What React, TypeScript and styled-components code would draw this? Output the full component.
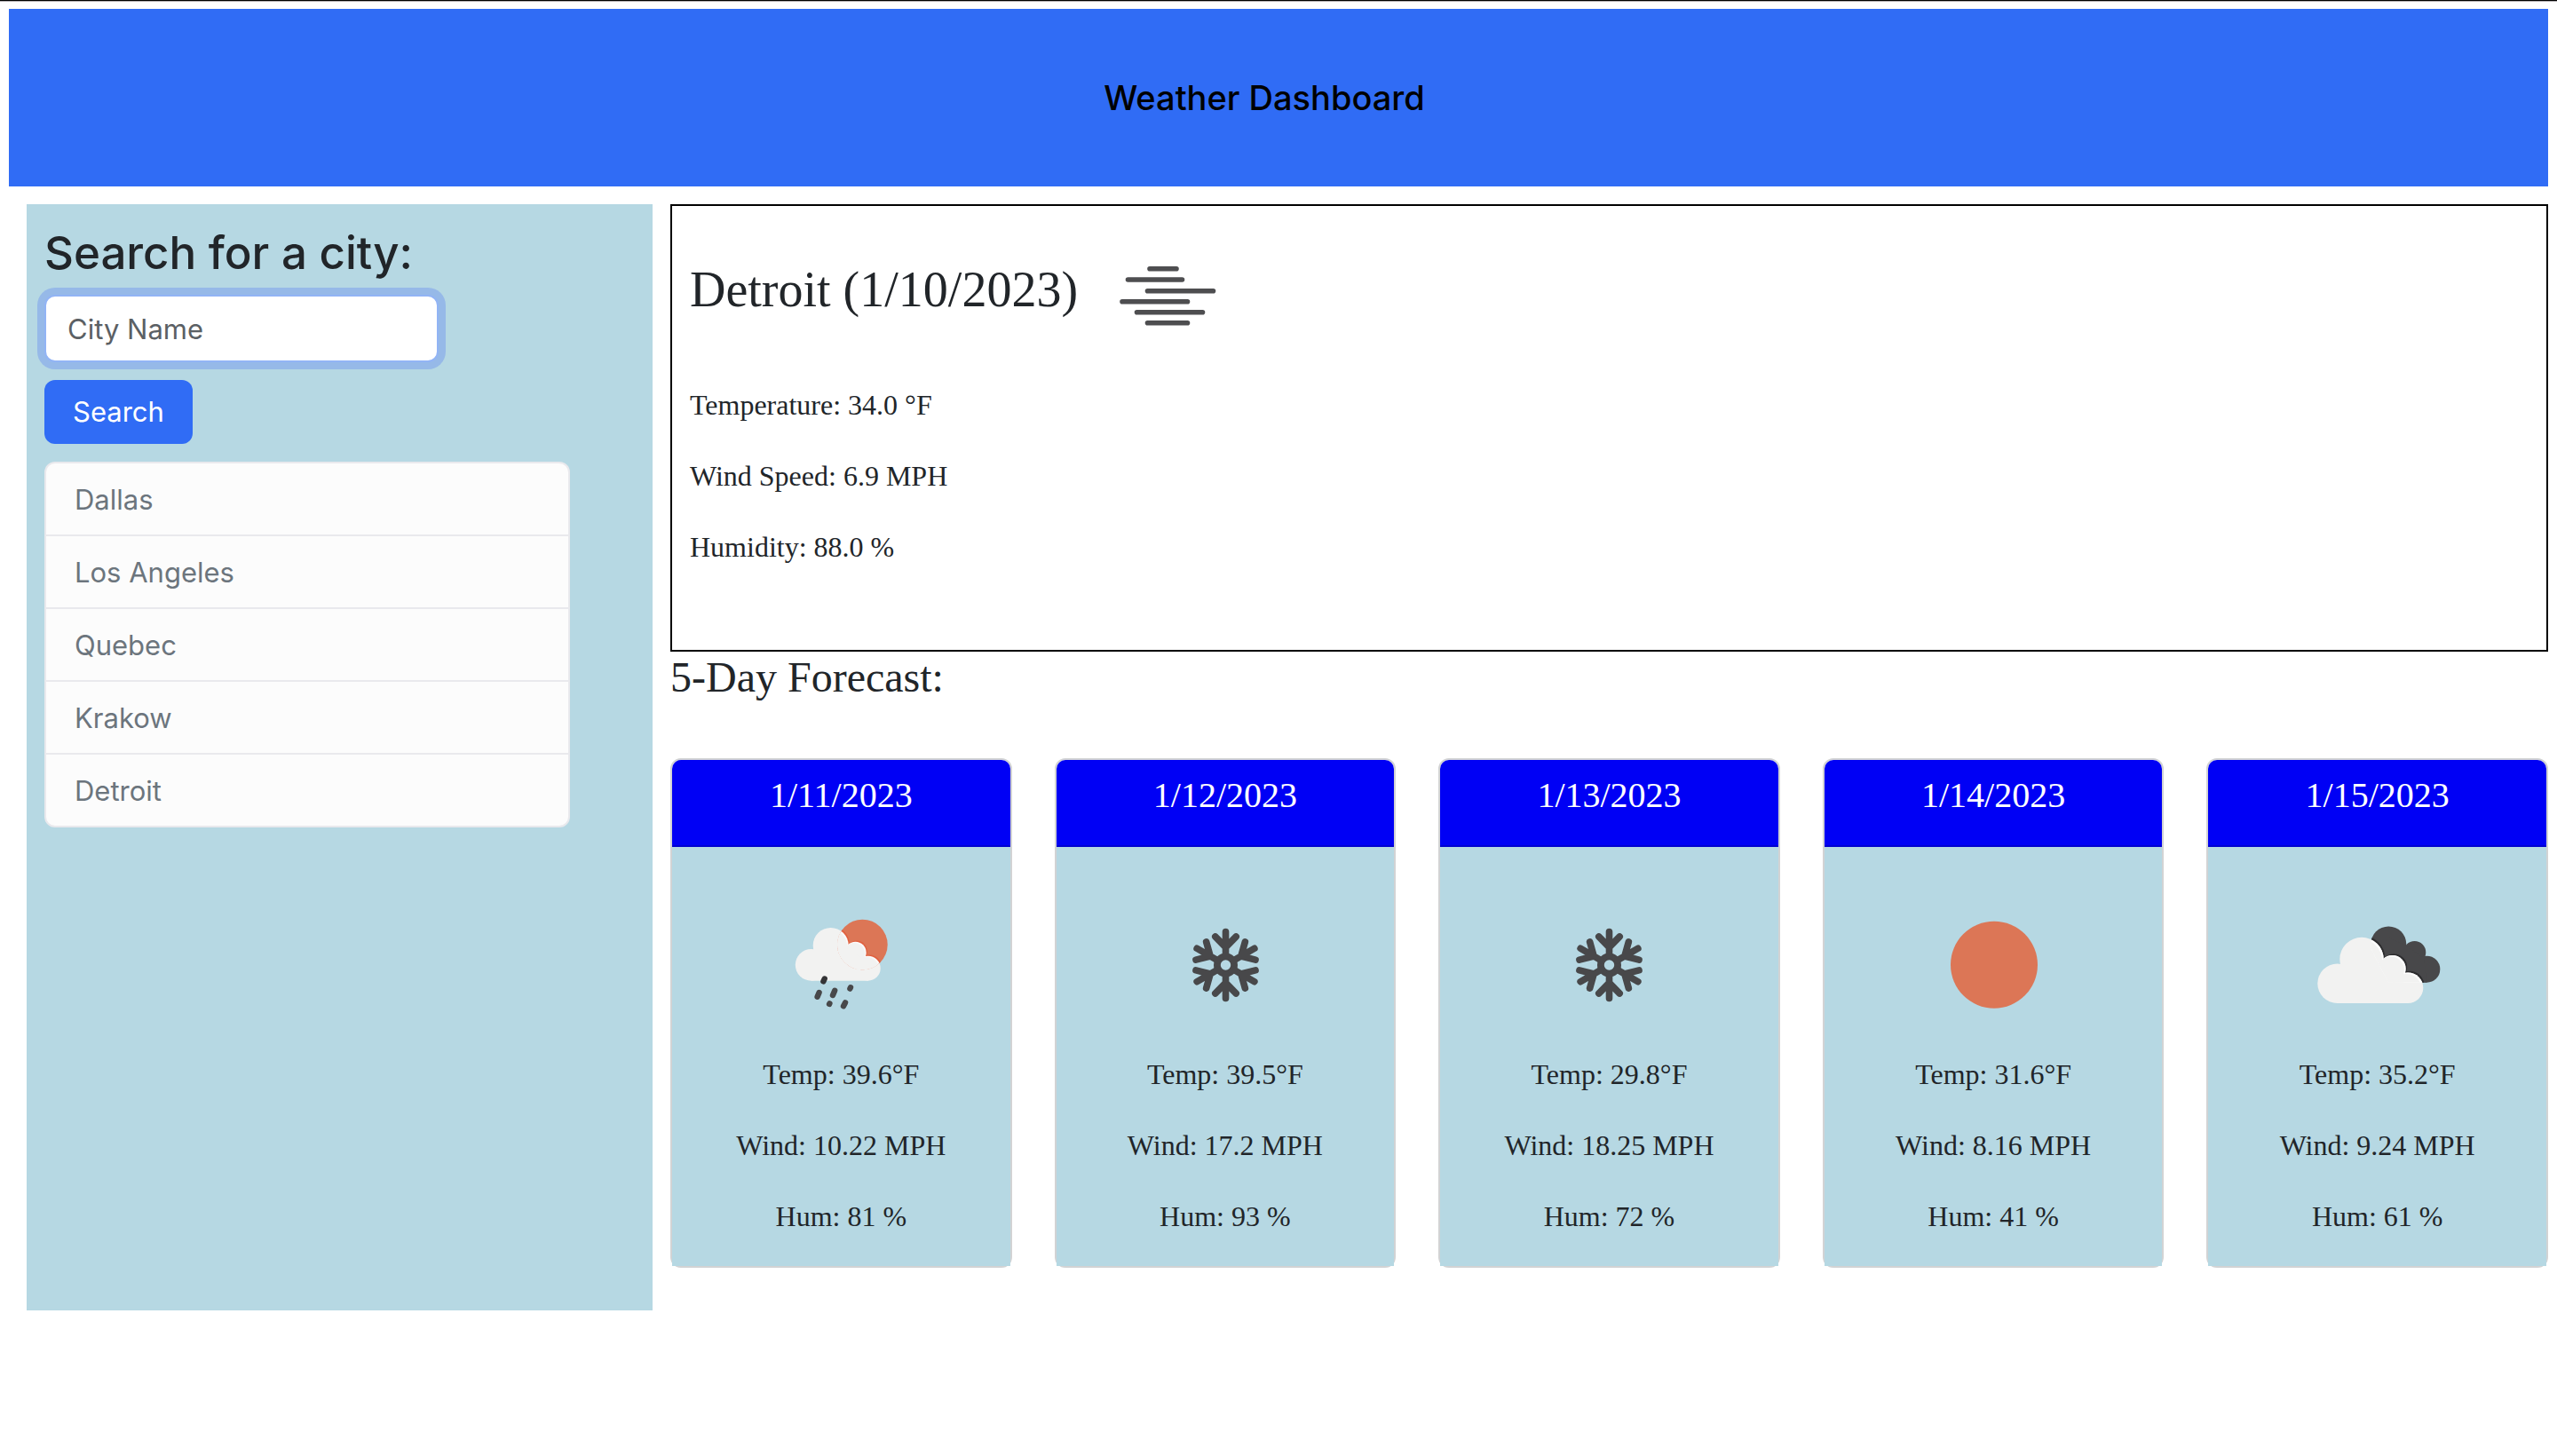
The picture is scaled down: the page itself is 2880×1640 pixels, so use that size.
import React from "react";
import styled, { createGlobalStyle } from "styled-components";

const sans = `Inter, "Liberation Sans", sans-serif`;
const serif = `"Liberation Serif", "Times New Roman", serif`;

const GlobalStyle = createGlobalStyle`
  *, *::before, *::after { box-sizing: border-box; }
  body { margin: 0; background: #ffffff; color: #212529; font-family: ${sans}; font-size: 31px; line-height: 48px; }
  h1, h2, h3, p, ul { margin: 0; padding: 0; font-weight: 400; }
`;

const Page = styled.div`
  display: flex;
  flex-direction: column;
  gap: 20px;
  padding: 9px 10px 20px;
  border-top: 1px solid #000000;
  box-shadow: inset 0 1px 0 #b4b0b4;
`;

const Header = styled.header`
  display: flex;
  align-items: center;
  justify-content: center;
  min-height: 200px;
  padding-right: 32px;
  background: #306cf5;
`;

const Title = styled.h1`
  font-size: 38px;
  line-height: 48px;
  font-weight: 500;
  color: #000000;
`;

const Columns = styled.div`
  display: grid;
  grid-template-columns: 1fr 3fr;
  gap: 20px;
  padding-left: 20px;
`;

const Sidebar = styled.aside`
  padding: 20px;
  background: #b6d8e3;
`;

const SearchForm = styled.form`
  display: flex;
  flex-direction: column;
  align-items: flex-start;
  gap: 20px;
`;

const Field = styled.div`
  display: flex;
  flex-direction: column;
  gap: 12px;
  max-width: 100%;
`;

const SearchHeading = styled.h2`
  font-size: 51px;
  line-height: 70px;
  font-weight: 500;
`;

const CityInput = styled.input`
  width: 444px;
  max-width: 100%;
  height: 76px;
  padding: 12px 24px;
  border: 2px solid #92b4f5;
  border-radius: 12px;
  outline: none;
  background: #ffffff;
  box-shadow: 0 0 0 8px #96b9e8;
  color: #212529;
  font: inherit;
  &::placeholder { color: #5b6064; opacity: 1; }
`;

const SearchButton = styled.button`
  height: 72px;
  padding: 0 32px;
  border: 0;
  border-radius: 12px;
  background: #306cf5;
  color: #ffffff;
  font: inherit;
`;

const CityList = styled.ul`
  max-width: 592px;
  margin-top: 20px;
  list-style: none;
  overflow: hidden;
  border: 2px solid #e9e9ed;
  border-radius: 12px;
  background: #fcfcfc;
`;

const CityItem = styled.li`
  & + & { border-top: 2px solid #e9e9ed; }
`;

const CityButton = styled.button`
  display: block;
  width: 100%;
  padding: 17px 32px 15px;
  border: 0;
  background: transparent;
  color: #6c757d;
  font: inherit;
  text-align: left;
`;

const Main = styled.main`
  padding-bottom: 48px;
  font-family: ${serif};
  font-size: 32px;
`;

const Current = styled.section`
  padding: 0 20px 60px;
  border: 2px solid #000000;
`;

const CurrentHeading = styled.h2`
  font-size: 56px;
  line-height: 68px;
`;

const Reading = styled.p`
  margin-bottom: 32px;
`;

const ForecastHeading = styled.h3`
  margin-bottom: 62px;
  font-size: 48px;
  line-height: 58px;
`;

const Cards = styled.div`
  display: grid;
  grid-template-columns: repeat(5, 1fr);
  gap: 48px;
`;

const Card = styled.article`
  border: 2px solid #d2d3d4;
  border-radius: 12px;
  text-align: center;
`;

const CardHeader = styled.header`
  padding: 16px 16px 32px;
  border-bottom: 2px solid #0000d0;
  border-radius: 10px 10px 0 0;
  background: #0000f5;
  color: #ffffff;
`;

const CardDate = styled.h3`
  font-size: 40px;
  line-height: 48px;
`;

const CardBody = styled.div`
  display: flex;
  flex-direction: column;
  padding: 32px 32px 0;
  background: #b6d8e3;
`;

const IconSvg = styled.svg`
  width: 200px;
  height: 200px;
  vertical-align: middle;
`;

const CardIcon = styled.div`
  height: 200px;
  line-height: 0;
`;

const DARK = "#48484a";
const SUN = "#dc7656";
const CLOUD = "#f2f2f1";

type Kind = "mist" | "rain" | "snow" | "clear" | "clouds";

const Mist = () => (
  <g stroke="#4e4e50" strokeWidth="5.6" strokeLinecap="round">
    <path d="M81 70.7H111M56.5 83H117.5M78.5 95.7H152.5M50 107.7H123.5M66.5 119.7H140.5M78.5 131.7H123.5" />
  </g>
);

const RainCloud = ({ fill, shift = 0 }: { fill: string; shift?: number }) => (
  <g fill={fill} transform={`translate(${-shift} ${shift})`}>
    <circle cx="66.7" cy="100.8" r="17.9" />
    <circle cx="88.7" cy="78.9" r="20" />
    <circle cx="116.5" cy="87" r="12.2" />
    <circle cx="130.7" cy="104.7" r="14" />
    <path d="M66.7 85H88.7L108 80L127 93L131 118.7H66.7Z" />
  </g>
);

const Rain = () => (
  <>
    <clipPath id="rain-sun"><circle cx="124.4" cy="78" r="28.3" /></clipPath>
    <circle cx="124.4" cy="78" r="28.3" fill={SUN} />
    <RainCloud fill={CLOUD} />
    <g clipPath="url(#rain-sun)">
      <RainCloud fill="#e0603f" shift={-1.2} />
      <RainCloud fill="#fafafa" />
      <RainCloud fill={CLOUD} shift={1.4} />
    </g>
    <g stroke={DARK} strokeWidth="6.4" strokeLinecap="round">
      <path stroke="#343436" d="M81.7 116.5L80.4 119.3" />
      <path d="M75.6 132L73.6 136.8M93.2 129.8L91 135M111 126.2L110.4 127.6M87.4 144.4L87.1 145M105 143.4L103 147.2" />
    </g>
  </>
);

const Snow = () => (
  <g transform="translate(100.5 101)" stroke={DARK} strokeLinecap="round" strokeLinejoin="round" fill="none">
    <circle r="9.6" strokeWidth="7.8" />
    {[0, 60, 120, 180, 240, 300].map((angle) => (
      <path key={angle} transform={`rotate(${angle})`} strokeWidth="7.6" d="M0 -11V-37.4M-11.7 -32L0 -20L11.7 -32" />
    ))}
  </g>
);

const Clear = () => <circle cx="101" cy="100.7" r="49" fill={SUN} />;

const FrontCloud = ({ fill, shift = 0 }: { fill: string; shift?: number }) => (
  <g fill={fill} transform={`translate(${-shift} ${shift})`}>
    <circle cx="54.5" cy="121.8" r="22.2" />
    <circle cx="82" cy="94.5" r="24.7" />
    <circle cx="116.6" cy="105" r="15" />
    <circle cx="134" cy="126.7" r="17.3" />
    <path d="M54.5 105H82L106 96L130 112L134 144H54.5Z" />
  </g>
);

const BackCloud = () => (
  <>
    <circle cx="112.3" cy="77.4" r="20" />
    <circle cx="141.6" cy="86.8" r="12.7" />
    <circle cx="155.3" cy="105.7" r="15" />
    <path d="M112.3 70L130 78L152 93L155.3 120.7H112.3L96 90Z" />
  </>
);

const Clouds = () => (
  <>
    <clipPath id="clouds-back"><BackCloud /></clipPath>
    <g fill={DARK}><BackCloud /></g>
    <g clipPath="url(#clouds-back)"><FrontCloud fill="#2c2c2e" shift={-1.6} /></g>
    <FrontCloud fill={CLOUD} />
    <g clipPath="url(#clouds-back)">
      <FrontCloud fill="#ffffff" />
      <FrontCloud fill={CLOUD} shift={1.6} />
    </g>
  </>
);

const drawings: Record<Kind, () => React.JSX.Element> = {
  mist: Mist,
  rain: Rain,
  snow: Snow,
  clear: Clear,
  clouds: Clouds,
};

const WeatherIcon = ({ kind }: { kind: Kind }) => {
  const Drawing = drawings[kind];
  return (
    <IconSvg viewBox="0 0 200 200" aria-hidden="true">
      <Drawing />
    </IconSvg>
  );
};

const cities = ["Dallas", "Los Angeles", "Quebec", "Krakow", "Detroit"];

const forecast: { date: string; kind: Kind; temp: string; wind: string; hum: string }[] = [
  { date: "1/11/2023", kind: "rain", temp: "39.6", wind: "10.22", hum: "81" },
  { date: "1/12/2023", kind: "snow", temp: "39.5", wind: "17.2", hum: "93" },
  { date: "1/13/2023", kind: "snow", temp: "29.8", wind: "18.25", hum: "72" },
  { date: "1/14/2023", kind: "clear", temp: "31.6", wind: "8.16", hum: "41" },
  { date: "1/15/2023", kind: "clouds", temp: "35.2", wind: "9.24", hum: "61" },
];

export default function App() {
  return (
    <>
      <GlobalStyle />
      <Page>
        <Header>
          <Title>Weather Dashboard</Title>
        </Header>
        <Columns>
          <Sidebar>
            <SearchForm onSubmit={(event) => event.preventDefault()}>
              <Field>
                <SearchHeading>
                  <label htmlFor="city">Search for a city:</label>
                </SearchHeading>
                <CityInput id="city" type="text" placeholder="City Name" />
              </Field>
              <SearchButton type="submit">Search</SearchButton>
            </SearchForm>
            <CityList>
              {cities.map((city) => (
                <CityItem key={city}>
                  <CityButton type="button">{city}</CityButton>
                </CityItem>
              ))}
            </CityList>
          </Sidebar>
          <Main>
            <Current>
              <CurrentHeading>
                Detroit (1/10/2023)
                <WeatherIcon kind="mist" />
              </CurrentHeading>
              <Reading>Temperature: 34.0 °F</Reading>
              <Reading>Wind Speed: 6.9 MPH</Reading>
              <Reading>Humidity: 88.0 %</Reading>
            </Current>
            <ForecastHeading>5-Day Forecast:</ForecastHeading>
            <Cards>
              {forecast.map((day) => (
                <Card key={day.date}>
                  <CardHeader>
                    <CardDate>{day.date}</CardDate>
                  </CardHeader>
                  <CardBody>
                    <CardIcon>
                      <WeatherIcon kind={day.kind} />
                    </CardIcon>
                    <Reading>{`Temp: ${day.temp}°F`}</Reading>
                    <Reading>{`Wind: ${day.wind} MPH`}</Reading>
                    <Reading>{`Hum: ${day.hum} %`}</Reading>
                  </CardBody>
                </Card>
              ))}
            </Cards>
          </Main>
        </Columns>
      </Page>
    </>
  );
}
